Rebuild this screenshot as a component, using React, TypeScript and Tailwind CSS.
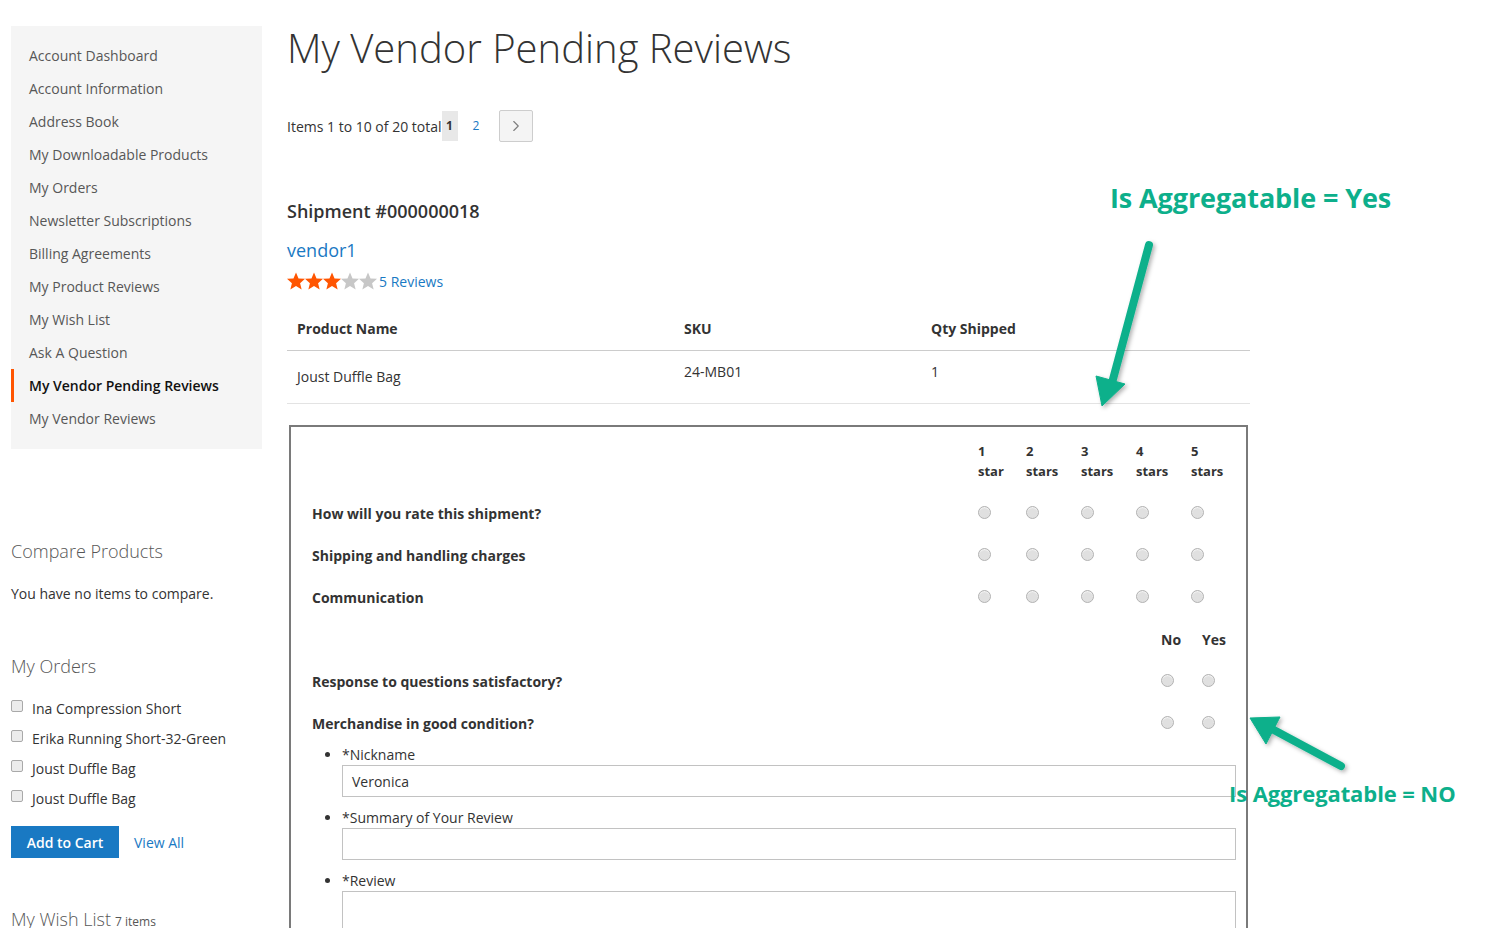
import React from 'react';
import { ChevronRight } from 'lucide-react';

const navItems = [
  'Account Dashboard',
  'Account Information',
  'Address Book',
  'My Downloadable Products',
  'My Orders',
  'Newsletter Subscriptions',
  'Billing Agreements',
  'My Product Reviews',
  'My Wish List',
  'Ask A Question',
  'My Vendor Pending Reviews',
  'My Vendor Reviews',
];

const orders = ['Ina Compression Short', 'Erika Running Short-32-Green', 'Joust Duffle Bag', 'Joust Duffle Bag'];

const Radio = () => (
  <span className="block w-[13px] h-[13px] rounded-full border border-[#b3b3b3] bg-[#e0e0e0] shadow-[inset_0_1px_1px_rgba(255,255,255,0.7)]" />
);

const Star = ({ on }: { on: boolean }) => (
  <svg width="18" height="18" viewBox="1 1.5 22 21">
    <polygon
      points="12,1.5 15.1,8.8 23,9.4 17,14.6 18.9,22.4 12,18.2 5.1,22.4 7,14.6 1,9.4 8.9,8.8"
      fill={on ? '#ff5501' : '#c7c7c7'}
    />
  </svg>
);

const Sidebar = () => (
  <aside className="w-[251px] shrink-0">
    <nav className="bg-[#f5f5f5] pt-[13px] pb-[14px]">
      {navItems.map((item) => {
        const active = item === 'My Vendor Pending Reviews';
        return (
          <div
            key={item}
            className={
              active
                ? 'h-[33px] flex items-center pl-[15px] border-l-[3px] border-[#ff5501] text-[#111] font-semibold'
                : 'h-[33px] flex items-center pl-[18px] text-[#575757]'
            }
          >
            {item}
          </div>
        );
      })}
    </nav>

    <div className="mt-[90px]">
      <h3 className="text-[18px] font-light text-[#575757] leading-[24px]">Compare Products</h3>
      <p className="mt-[20px] text-[#333]">You have no items to compare.</p>
    </div>

    <div className="mt-[50px]">
      <h3 className="text-[18px] font-light text-[#575757] leading-[24px]">My Orders</h3>
      <ul className="mt-[15px]">
        {orders.map((o, i) => (
          <li key={i} className="h-[30px] flex items-center text-[#333]">
            <span className="w-[12px] h-[12px] rounded-[2px] border border-[#a9a9a9] bg-[#ececec] mr-[9px] -mt-[4px]" />
            {o}
          </li>
        ))}
      </ul>
      <div className="mt-[13px] flex items-center">
        <button className="h-[32px] w-[108px] bg-[#1979c3] text-white font-semibold">Add to Cart</button>
        <a className="ml-[15px] text-[#1979c3]">View All</a>
      </div>
    </div>

    <div className="mt-[48px] text-[#575757]">
      <span className="text-[18px] font-light">My Wish List</span>
      <span className="text-[12px] ml-1">7 items</span>
    </div>
  </aside>
);

const ratingRows = ['How will you rate this shipment?', 'Shipping and handling charges', 'Communication'];
const ratingCols = [
  ['1', 'star'],
  ['2', 'stars'],
  ['3', 'stars'],
  ['4', 'stars'],
  ['5', 'stars'],
];

const ReviewBox = () => (
  <div className="mt-[21px] border-2 border-[#7a7a7a] border-b-0 pl-[21px] pr-[10px] pt-[14px] pb-10 text-[13px] text-[#333]">
    <div className="grid grid-cols-[1fr_48px_55px_55px_55px_45px] text-[13px] font-bold leading-[20px]">
      <div />
      {ratingCols.map(([n, s]) => (
        <div key={n}>
          <div>{n}</div>
          <div>{s}</div>
        </div>
      ))}
    </div>
    <div className="mt-[11px]">
      {ratingRows.map((r) => (
        <div key={r} className="grid grid-cols-[1fr_48px_55px_55px_55px_45px] h-[42px] items-center">
          <div className="font-bold text-[14px]">{r}</div>
          {ratingCols.map(([n]) => (
            <div key={n} className="-mt-[2px]">
              <Radio />
            </div>
          ))}
        </div>
      ))}
    </div>

    <div className="grid grid-cols-[1fr_41px_34px] h-[42px] items-center font-bold text-[14px]">
      <div />
      <div>No</div>
      <div>Yes</div>
    </div>
    {['Response to questions satisfactory?', 'Merchandise in good condition?'].map((r) => (
      <div key={r} className="grid grid-cols-[1fr_41px_34px] h-[42px] items-center">
        <div className="font-bold text-[14px]">{r}</div>
        <div className="-mt-[2px]"><Radio /></div>
        <div className="-mt-[2px]"><Radio /></div>
      </div>
    ))}

    <ul className="pl-[30px] text-[14px] list-disc marker:text-[#333]">
      {[
        { label: '*Nickname', value: 'Veronica', h: 'h-[32px]' },
        { label: '*Summary of Your Review', value: '', h: 'h-[32px]' },
        { label: '*Review', value: '', h: 'h-[80px]' },
      ].map((f) => (
        <li key={f.label} className="mb-[10px]">
          <div className="leading-[20px] text-[#333]">{f.label}</div>
          <div className={`${f.h} border border-[#c2c2c2] bg-white flex items-center px-[9px] text-[#333]`}>{f.value}</div>
        </li>
      ))}
    </ul>
  </div>
);

const Annotations = () => (
  <div className="absolute inset-0 pointer-events-none">
    <div className="absolute left-[1110px] top-[180px] text-[27px] font-bold text-[#0daf8b] tracking-[-0.1px] leading-[36px] whitespace-nowrap">
      Is Aggregatable = Yes
    </div>
    <div className="absolute left-[1229px] top-[778px] text-[22px] font-bold text-[#0daf8b] tracking-[-0.1px] leading-[30px] whitespace-nowrap">
      Is Aggregatable = NO
    </div>
    <svg className="absolute left-0 top-0" width="1501" height="928">
      <defs>
        <filter id="sh" x="-20%" y="-20%" width="140%" height="140%">
          <feDropShadow dx="2" dy="2" stdDeviation="2" floodColor="#000" floodOpacity="0.3" />
        </filter>
      </defs>
      <g filter="url(#sh)" fill="#0db08b" stroke="#0db08b">
        <line x1="1149" y1="245" x2="1112" y2="383" strokeWidth="8" strokeLinecap="round" />
        <polygon points="1096,376 1125,384 1102,406" strokeWidth="1" />
        <line x1="1341" y1="766" x2="1272" y2="729" strokeWidth="8" strokeLinecap="round" />
        <polygon points="1250,718 1280,717 1266,744" strokeWidth="1" />
      </g>
    </svg>
  </div>
);

export default function App() {
  return (
    <div className="relative min-h-[928px] bg-white font-['Open_Sans',sans-serif] text-[14px] text-[#333] overflow-hidden">
      <div className="flex pt-[26px] pl-[11px]">
        <Sidebar />
        <main className="ml-[25px] w-[963px]">
          <h1 className="text-[40px] font-light leading-[48px] -mt-[2px] text-[#333]">My Vendor Pending Reviews</h1>

          <div className="mt-[38px] flex items-center h-[32px]">
            <span>Items 1 to 10 of 20 total</span>
            <span className="h-[30px] w-[16px] bg-[#e8e8e8] flex items-center justify-center font-bold text-[12px]">1</span>
            <span className="ml-[15px] text-[#1979c3] text-[12px]">2</span>
            <button className="ml-[20px] h-[32px] w-[34px] rounded-[2px] border border-[#cdcdcd] bg-[#f4f4f4] flex items-center justify-center">
              <ChevronRight size={18} color="#7d7d7d" strokeWidth={1.5} />
            </button>
          </div>

          <h2 className="mt-[57px] text-[18px] font-semibold leading-[24px] text-[#333]">Shipment #000000018</h2>
          <div className="mt-[15px] text-[18px] text-[#1979c3] leading-[24px] font-medium">vendor1</div>
          <div className="mt-[9px] flex items-center h-[20px]">
            {[true, true, true, false, false].map((on, i) => (
              <Star key={i} on={on} />
            ))}
            <span className="ml-[2px] text-[#1979c3]">5 Reviews</span>
          </div>

          <div className="mt-[16px]">
            <div className="grid grid-cols-[387px_247px_1fr] pl-[10px] h-[44px] items-center font-bold border-b border-[#cccccc]">
              <div>Product Name</div>
              <div>SKU</div>
              <div>Qty Shipped</div>
            </div>
            <div className="grid grid-cols-[387px_247px_1fr] pl-[10px] h-[53px] border-b border-[#e3e3e3]">
              <div className="pt-[15px]">Joust Duffle Bag</div>
              <div className="pt-[10px]">24-MB01</div>
              <div className="pt-[10px]">1</div>
            </div>
          </div>

          <div className="pl-[2px] w-[961px]">
            <ReviewBox />
          </div>
        </main>
      </div>
      <Annotations />
    </div>
  );
}
